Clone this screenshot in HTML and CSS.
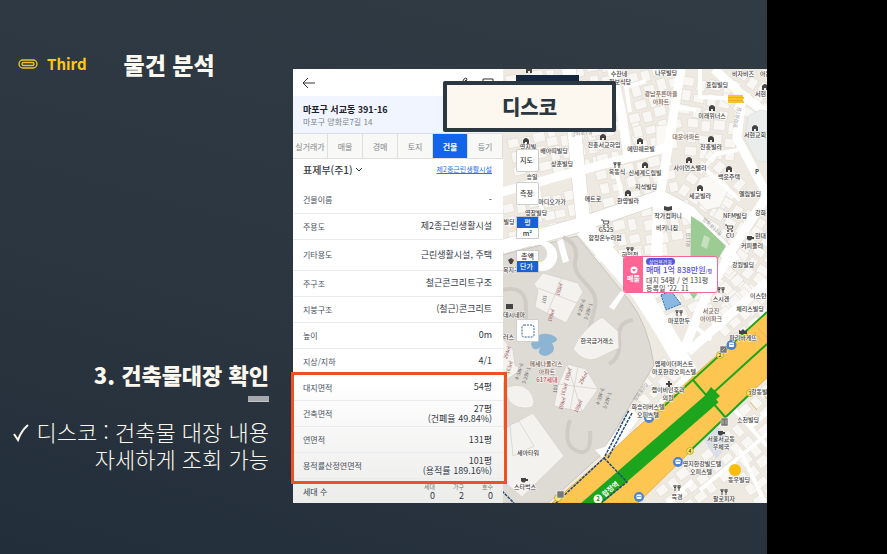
FILE: index.html
```html
<!DOCTYPE html>
<html lang="ko">
<head>
<meta charset="utf-8">
<title>물건 분석</title>
<link rel="stylesheet" href="styles.css">
</head>
<body>
<main class="slide">
  <section class="notes">
    <header class="chapter">
      <svg class="clip" viewBox="0 0 20 10" aria-hidden="true"><rect x="1" y="1" width="18" height="8" rx="4"/><rect x="4" y="3.500" width="12" height="3" rx="1.500"/></svg>
      <span class="chapter-name">Third</span>
      <h1>물건 분석</h1>
    </header>
    <div class="point">
      <h2>3. 건축물대장 확인</h2>
      <i class="bar"></i>
      <p><svg class="check" viewBox="0 0 18 20" aria-hidden="true"><path d="M2 11 L6 17 Q9 8 16 2"/></svg>디스코 : 건축물 대장 내용<br>자세하게 조회 가능</p>
    </div>
  </section>

  <section class="capture">
    <article class="panel">
      <div class="topbar">
        <button class="icon" aria-label="뒤로"><svg viewBox="0 0 14 12"><path d="M13 6H1M6 1L1 6l5 5"/></svg></button>
        <span class="tools">
          <button class="icon" aria-label="편집"><svg viewBox="0 0 14 12"><path d="M4 8l3-6q2-2 3 0l-2 5M6 6l3-3"/></svg></button>
          <button class="icon" aria-label="창"><svg viewBox="0 0 14 12"><path d="M3 10V2h10v8z"/></svg></button>
        </span>
      </div>
      <div class="address">
        <strong>마포구 서교동 391-16</strong>
        <span>마포구 양화로7길 14</span>
      </div>
      <nav class="tabs">
        <button>실거래가</button><button>매물</button><button>경매</button><button>토지</button><button class="on">건물</button><button>등기</button>
      </nav>
      <div class="ledger">
        <button class="pick">표제부(주1)<svg viewBox="0 0 8 8" aria-hidden="true"><path d="M1 3l3 3 3-3"/></svg></button>
        <a href="#use">제2종근린생활시설</a>
      </div>
      <table>
        <tbody>
          <tr><th>건물이름</th><td>-</td></tr>
          <tr><th>주용도</th><td>제2종근린생활시설</td></tr>
          <tr class="tall"><th>기타용도</th><td>근린생활시설, 주택</td></tr>
          <tr><th>주구조</th><td>철근콘크리트구조</td></tr>
          <tr><th>지붕구조</th><td>(철근)콘크리트</td></tr>
          <tr><th>높이</th><td>0m</td></tr>
          <tr><th>지상/지하</th><td>4/1</td></tr>
        </tbody>
      </table>
      <div class="marked">
        <table>
          <tbody>
            <tr><th>대지면적</th><td>54평</td></tr>
            <tr><th>건축면적</th><td>27평<br>(건폐율 49.84%)</td></tr>
            <tr><th>연면적</th><td>131평</td></tr>
            <tr><th>용적률산정연면적</th><td>101평<br>(용적률 189.16%)</td></tr>
          </tbody>
        </table>
      </div>
      <div class="units">
        <span class="label">세대 수</span>
        <span class="unit"><small>세대</small>0</span>
        <span class="unit"><small>가구</small>2</span>
        <span class="unit"><small>호수</small>0</span>
      </div>
    </article>

    <div class="map">
      <svg class="streets" viewBox="503 69 264 434" preserveAspectRatio="xMidYMid slice">
        <defs>
          <g id="lots">
            <path d="M0 0h11v9h-11zM14 1h9v11h-9zM26 -1h12v10h-12zM41 0h8v12h-8zM1 13h9v11h-9zM13 16h11v8h-11zM27 13h9v12h-9zM39 16h11v9h-11zM0 28h12v9h-12zM15 28h8v11h-8zM26 29h12v9h-12zM41 28h9v10h-9z"/>
          </g>
          <g id="home"><path d="M-3 3V-1Q0-5 3-1V3H1V1H-1V3z"/></g>
          <g id="fork"><path d="M-3-3v2q1 2 2 0v-2M-2-3v6M2-3v6M1-3v3h2v-3"/></g>
          <g id="cart"><path d="M-4-3h2l1 4h4l1-3h-5"/><circle cx="-1" cy="3" r=".6"/><circle cx="3" cy="3" r=".6"/></g>
          <g id="cup"><path d="M-3-2h5v3q-2.500 3-5 0zM2-1h2v2h-2"/></g>
          <g id="bus"><circle r="5"/><rect x="-2.500" y="-2.500" width="5" height="4.500" rx="1"/><path d="M-2-.5h4M-1.500 2v1M1.500 2v1"/></g>
        </defs>
        <rect class="ground" x="502" y="69" width="265" height="434"/>
        <g class="lots">
          <use href="#lots" transform="translate(505 76) rotate(-8)"/>
          <use href="#lots" transform="translate(560 68) rotate(-10)"/>
          <use href="#lots" transform="translate(507 140) rotate(-12)"/>
          <use href="#lots" transform="translate(546 138) rotate(-12)"/>
          <use href="#lots" transform="translate(590 128) rotate(-12)"/>
          <use href="#lots" transform="translate(595 172) rotate(-14)"/>
          <use href="#lots" transform="translate(626 75) rotate(-16)"/>
          <use href="#lots" transform="translate(628 115) rotate(-14)"/>
          <use href="#lots" transform="translate(622 165) rotate(-13)"/>
          <use href="#lots" transform="translate(538 198) rotate(-12)"/>
          <use href="#lots" transform="translate(502 205) rotate(-12)"/>
          <use href="#lots" transform="translate(587 228) rotate(-12)"/>
          <use href="#lots" transform="translate(640 208) rotate(-10)"/>
          <use href="#lots" transform="translate(618 250) rotate(-8)"/>
          <use href="#lots" transform="translate(684 76) rotate(10)"/>
          <use href="#lots" transform="translate(688 118) rotate(6)"/>
          <use href="#lots" transform="translate(710 150) rotate(42)"/>
          <use href="#lots" transform="translate(690 172) rotate(34)"/>
          <use href="#lots" transform="translate(725 196) rotate(32)"/>
          <use href="#lots" transform="translate(740 68) rotate(32)"/>
          <use href="#lots" transform="translate(755 225) rotate(34)"/>
          <use href="#lots" transform="translate(738 256) rotate(40)"/>
          <use href="#lots" transform="translate(690 295) rotate(-42)"/>
          <use href="#lots" transform="translate(708 320) rotate(-42)"/>
          <use href="#lots" transform="translate(650 292) rotate(-28)"/>
          <use href="#lots" transform="translate(628 390) rotate(-42)"/>
          <use href="#lots" transform="translate(655 490) rotate(-38)"/>
          <use href="#lots" transform="translate(700 455) rotate(-40)"/>
          <use href="#lots" transform="translate(738 410) rotate(-42)"/>
          <use href="#lots" transform="translate(735 478) rotate(-38)"/>
        </g>
        <path class="big" d="M656 126l19-2 3 24-22 4zM700 178l18-5 12 14-10 20-14 3-13-14z"/>
        <g class="casing">
          <path d="M569 69L577 160L584 228L640 292L664 330L690 375"/><path d="M502 247L582 224L660 197L690 213L735 262"/>
        </g>
        <g class="road wide"><path d="M569 69L577 160L584 228"/><path class="avenue" d="M584 228L640 292L664 330L690 375"/><path d="M502 247L582 224L660 197L690 213L735 262"/></g>
        <g class="road">
          <path d="M502 192L575 172L665 148"/><path d="M681 69L671 130L660 195L657 270"/>
          <path d="M612 69L622 115L628 155"/><path d="M714 69L742 95L767 114"/><path d="M742 98L737 138L767 195"/>
          <path d="M767 196L735 245L704 300L684 350"/><path d="M688 352L767 282"/><path d="M502 112L567 100"/>
          <path d="M640 430L690 375"/>
        </g>
        <g class="road thin"><path d="M676 107l20 3M738 150l-22 4-12 14 36 32M630 112l-4-25 20-6M700 69v28l42 2M535 178l9 40M605 222l12 50M655 205l-3 75M615 165l10 45M735 410l32 36M700 490l67-56M668 503l24-22M752 426l15-13M740 450l25 53M676 310l35 30"/></g>
        <path class="church" d="M748 116l12-6 7 1v51l-10-1-12-22z"/>
        <path class="park" d="M691 216l11 7 24 23-32 53-4-5z"/><path class="parklot" d="M704 235l6 3-3 11-6-3z"/>
        <path class="complex" d="M502 255L577 236 629 300Q648 324 654 365L600 456 548 503H502z"/>
        <g class="walk">
          <path d="M563 237q17 8 12 25c-3 18 25 24 20 45s-8 22-1 34"/><path d="M502 290q25-6 24 20t12 26M633 320q-16 2-14 20t-10 24M570 420q-8 25 7 31t13-20"/>
        </g>
        <path class="road-fill" d="M532 245a15 15 0 1 1 0 22v-7a9 9 0 1 0 0-13zM557 241l6-2 6 22-6 2zM621 291l4 2-11 17-5-3zM595 450l10-3 27-38 8 8-33 45z"/>
        <g class="tower">
          <path d="M543 273l35 10 5 9-17 31-31-16 3-17-4-6z"/><path d="M538 288l39 15M562 277l-15 37"/>
          <path d="M567 364l19 5 12 20-16 23-28-6 4-21z"/><path d="M558 384l40 5M578 366l-8 45M567 364l15 48"/>
          <path d="M502 338l11 12 2 15 7 4-20 14z"/>
          <path d="M502 430l31-17 31 43-42 41-20-17z"/><path d="M510 425l9-4 15 25-21 10z"/>
          <path d="M602 317l16 14 1 17-23 11q-12 4-23-10 8-19 29-32z"/>
          <path d="M507 387q18-6 25 8t-8 13-17-13z"/>
        </g>
        <path class="water" d="M531 344q6-14 21-9 10 5 0 8 6 10-7 13-10-2-4-9-8 6-10-3z"/>
        <path class="post" d="M702 436l16-9 14 14-16 18z"/>
        <path class="highway" d="M552 503L604 458 700 370 767 312V378L740 402 692 450 638 503z"/>
        <path class="hatch" d="M754 332l9 10M758 328l9 10M750 402l7 8M762 392l5 7"/>
        <g class="metro">
          <path class="track" d="M586 508L714 397"/><path d="M663 407L767 312M713 393L767 344M693 380L726 418M690 451L752 392"/>
        </g>
        <path class="platform" d="M705 395l6-8 9 9-9 8z"/>
        <path class="dots" d="M556 503L604 458L629 410M608 458L632 413M604 458L627 482L602 502M502 491L514 503"/>
        <path class="target" d="M661 295l10-4 10 13-15 6z"/>
        <g class="exits">
          <circle cx="661" cy="408" r="3.500"/><circle cx="720" cy="355" r="3.500"/><circle cx="750" cy="393" r="3.500"/><circle cx="690" cy="451" r="3.500"/><circle cx="558" cy="498" r="3.500"/>
        </g>
        <g class="digits"><text x="661" y="410">1</text><text x="720" y="357">2</text><text x="750" y="395">3</text><text x="690" y="453">4</text></g>
        <g class="lift"><rect x="720" y="346" width="7" height="7"/><rect x="721" y="418" width="7" height="8"/><rect x="557" y="491" width="7" height="7"/><path d="M722 351l3-3M723 420v4M726 420v4"/></g>
        <g class="bus"><use href="#bus" x="731.500" y="345"/><use href="#bus" x="649" y="418"/><use href="#bus" x="678" y="462"/><use href="#bus" x="639" y="497"/></g>
        <circle class="dot" cx="735" cy="470" r="6"/>
        <path class="memo" d="M728 95h15v2h1v2h-1v2h1v2h-16z"/><path class="memo-lines" d="M728 97.500h15M728 100.500h15"/>
        <g class="marks">
          <use href="#home" x="526" y="141"/><use href="#home" x="603" y="137"/><use href="#home" x="529" y="70"/><use href="#home" x="640" y="141"/><use href="#home" x="645" y="165"/><use href="#home" x="628" y="193"/><use href="#home" x="712" y="108"/><use href="#home" x="711" y="139"/><use href="#home" x="689" y="160"/><use href="#home" x="729" y="169"/><use href="#home" x="700" y="188"/><use href="#home" x="755" y="128"/><use href="#home" x="765" y="87"/>
        </g>
        <g class="lines"><use href="#fork" x="617" y="165"/><use href="#fork" x="630" y="250"/><use href="#fork" x="679" y="313"/><use href="#fork" x="721" y="290"/><use href="#fork" x="677" y="488"/><use href="#fork" x="724" y="492"/><use href="#cart" x="605" y="223"/><use href="#cart" x="729" y="228"/></g>
        <g class="marks"><use href="#cup" x="524" y="480"/><use href="#cup" x="750" y="238"/><use href="#cup" x="721" y="433"/><path d="M664 206l4 1 4-1v4l-4 1-4-1zM739 330l2 1 2-2 2 2 2-1v4h-8zM666 383h2v-2h2v2h2v2h-2v2h-2v-2h-2zM506 304h7v5h-7zM508 260l3-2 3 2-2 4h-2z"/></g>
        <g class="names">
          <text x="528" y="149">영지빌</text><text x="554" y="153">배아띠빌딩</text><text x="562" y="166">상훈빌딩</text><text x="532" y="179">승일</text><text x="604" y="147">진흥서교하임</text><text x="617" y="174">옥동식</text>
          <text x="619" y="76">수잔네</text><text x="620" y="84">한보식당</text><text x="666" y="75">나무빌딩</text><text x="743" y="76">비자비즈</text><text class="edge" x="760" y="76">아몬</text><text x="717" y="87">효림빌딩</text><text class="edge" x="755" y="96">서현</text>
          <text class="brown" x="661" y="96">광남푸른마을</text><text class="brown" x="661" y="104">아파트</text><text x="712" y="118">미래위너스</text><text class="brown" x="686" y="139">대운아파트</text><text x="711" y="149">진흥빌라</text><text x="755" y="137">서현교회</text>
          <text x="641" y="151">에띤쉐르빌</text><text x="645" y="175">신세계드림빌</text><text x="646" y="189">지석빌딩</text><text x="628" y="203">한영빌라</text><text x="690" y="170">사이언스밸리</text><text x="729" y="179">백운주택</text><text x="700" y="198">세교빌라</text><text x="750" y="196">엘림빌딩</text>
          <text class="bold" x="757" y="174">P</text><text x="668" y="218">작가컴퍼니</text><text x="667" y="230">비키니짐</text><text x="735" y="218">NFM빌딩</text><text class="edge" x="755" y="215">강화</text><text x="730" y="238">CU</text><text class="edge" x="755" y="238">현대</text><text x="752" y="248">커피폴리</text>
          <text x="552" y="204">마디오가가</text><text x="593" y="201">메트로</text><text x="536" y="215">영창빌딩</text><text x="509" y="224">빌딩</text><text x="606" y="232">GS25</text><text x="605" y="240">합정온누리점</text><text x="630" y="257">하임점</text><text class="edge" x="503" y="272">복지구</text>
          <text x="743" y="267">강원빌딩</text><text x="721" y="301">스시겐</text><text class="edge" x="750" y="298">이스턴</text><text x="750" y="311">체리스빌딩</text><text class="brown" x="711" y="313">서교진</text><text class="brown" x="711" y="321">아이파크</text><text x="679" y="323">마포만두</text><text x="743" y="340">파리바게뜨</text>
          <text class="edge" x="503" y="317">데시네마</text><text class="edge" x="503" y="339">러스</text><text x="597" y="343">한국금거래소</text><text class="brown" x="546" y="366">메세나폴리스</text><text class="brown" x="547" y="374">아파트</text><text class="red" x="547" y="382">617세대</text>
          <text x="674" y="366">엠제이더퍼스트</text><text x="674" y="374">마포한강오피스텔</text><text x="668" y="392">랩이비인후과</text><text x="668" y="400">의원</text><text x="648" y="409">화승리버스텔</text><text x="648" y="417">오피스텔</text><text class="edge" x="751" y="394">강동빌</text><text x="748" y="422">소천빌딩</text>
          <text x="721" y="441">서울서교동</text><text x="721" y="449">우체국</text><text x="702" y="466">명지한강빌드텔</text><text x="701" y="474">오피스텔</text><text x="739" y="482">동우빌딩</text><text x="677" y="499">북경</text><text x="724" y="501">팔로피자</text><text x="528" y="455">세아타워</text><text x="525" y="489">스타벅스</text>
        </g>
        <g class="roadnames"><text transform="translate(711 228) rotate(42)">양화로11길</text><text transform="translate(739 118) rotate(-78)">양화로7길</text><text transform="translate(642 393) rotate(-52)">양화로7길</text><text transform="translate(690 240) rotate(-88)">로11길</text><text transform="translate(582 135) rotate(-8)">양화로7길</text></g>
        <g class="plots"><text transform="translate(546 300) rotate(-75)">103</text><text transform="translate(561 290) rotate(-72)" class="red">190㎡</text><text transform="translate(553 316) rotate(-72)" class="red">198㎡</text><text transform="translate(583 308) rotate(-72)">4-29F-6</text><text transform="translate(590 312) rotate(-72)">3-29F-1</text><text transform="translate(570 375) rotate(-72)" class="red">190㎡</text><text transform="translate(566 390) rotate(-72)" class="red">163㎡</text><text transform="translate(585 379) rotate(-60)" class="red">294㎡</text><text transform="translate(564 404) rotate(-72)" class="red">198㎡</text><text transform="translate(580 407) rotate(-65)" class="red">198㎡</text><text transform="translate(557 389) rotate(-85)">101</text><text transform="translate(602 397) rotate(-72)">4-39F-6</text><text transform="translate(609 401) rotate(-72)">3-29F-1</text><text transform="translate(521 372) rotate(-72)">4-38F-6</text><text transform="translate(528 376) rotate(-72)">3-29F-1</text><text transform="translate(509 353) rotate(-72)" class="red">294㎡</text><text transform="translate(511 368) rotate(-72)" class="red">163㎡</text></g>
        <g class="station"><circle cx="598" cy="499" r="4.500"/><text class="line-no" x="598" y="501">2</text><text class="station-name" transform="translate(612 491) rotate(-41)">합정역</text></g>
      </svg>
      <div class="controls">
        <button class="tile">지도<i>⁝</i></button>
        <button class="tile">측정<i>⁝</i></button>
        <div class="switch"><button class="on">평</button><button>m²</button></div>
        <div class="switch"><button>총액</button><button class="on">단가<i>⁝</i></button></div>
        <button class="tile area" aria-label="영역"><svg viewBox="0 0 16 16"><rect x="2" y="2" width="12" height="12" rx="2"/></svg></button>
      </div>
      <div class="listing">
        <div class="kind"><svg viewBox="0 0 8 8" aria-hidden="true"><circle cx="4" cy="4" r="3.500"/><path d="M2 3l2 3 2-3z"/></svg>매물</div>
        <div class="facts"><em>상업용건물</em><b>매매 1억 838만원<small>/평</small></b><span>대지 54평 / 연 131평</span><span>등록일 '22. 11</span></div>
      </div>
    </div>
    <div class="shade"></div>
    <div class="brand">디스코</div>
  </section>
</main>
</body>
</html>
```
FILE: styles.css
```css
* { box-sizing: border-box; }
body {
  margin: 0;
  min-height: 100vh;
  padding-right: 120px;
  background: #000;
  font-family: "Noto Sans CJK KR", sans-serif;
}
button { border: 0; padding: 0; margin: 0; background: none; font: inherit; color: inherit; }
svg { display: block; }
i { font-style: normal; }
.slide {
  display: grid;
  grid-template-columns: 293px 1fr;
  min-height: 100vh;
  background: linear-gradient(15deg, #222e3a, #2c3640 45%, #303b44);
}

.notes {
  display: flex;
  flex-direction: column;
  justify-content: space-between;
  padding: 44px 24px 82px 12px;
  color: #fbf8f0;
}
.chapter { display: flex; align-items: center; height: 40px; padding-left: 6px; }
.clip { width: 20px; height: 10px; fill: none; stroke: #e9c02c; stroke-width: 1.4; }
.chapter-name { margin: 0 37px 0 9px; color: #fcc81c; font-size: 15px; font-weight: 700; line-height: 24px; }
h1, h2, p { margin: 0; }
h1 { font-size: 23px; font-weight: 900; line-height: 40px; }
.point { display: flex; flex-direction: column; align-items: flex-end; white-space: nowrap; }
h2 { font-size: 22px; font-weight: 900; line-height: 36px; }
.bar { width: 21px; height: 6px; margin: 4px 0 16px; background: #a5a8ad; border-bottom: 1px solid #c4c6c9; }
.point p { font-size: 22px; font-weight: 300; line-height: 27px; text-align: right; }
.check { display: inline-block; width: 18px; height: 20px; margin-right: 6px; vertical-align: -2px; fill: none; stroke: #fbf8f0; stroke-width: 2; }

.capture { position: relative; display: flex; align-items: stretch; margin: 69px 0 51px; }
.panel {
  display: flex;
  flex-direction: column;
  width: 210px;
  flex: none;
  background: linear-gradient(#fff 72%, #ececeb);
  color: #333a45;
  font-size: 8px;
  line-height: 11px;
}
.topbar { display: flex; justify-content: space-between; align-items: center; height: 27px; padding: 0 9px; }
.tools { display: flex; gap: 9px; }
.icon svg { width: 14px; height: 12px; fill: none; stroke: #333; stroke-width: 1; }
.address { display: flex; flex-direction: column; justify-content: center; height: 37px; padding: 0 10px; background: #f1f5ff; color: #80858c; }
.address strong { color: #1c2028; font-size: 9px; line-height: 13px; }
.tabs { display: grid; grid-template-columns: repeat(6, 1fr); height: 26px; border: solid #dedede; border-width: 1px 0; background: #f8f8f7; color: #85878b; }
.tabs button { border-right: 1px solid #dedede; white-space: nowrap; }
.tabs .on { background: #1264e8; color: #fff; font-weight: 700; }
.ledger { display: flex; justify-content: space-between; align-items: center; height: 28px; padding: 0 11px 8px 10px; }
.pick { display: flex; align-items: center; gap: 2px; font-size: 10px; font-weight: 500; }
.pick svg { width: 8px; height: 8px; fill: none; stroke: #333a45; }
.ledger a { color: #2a74e4; font-size: 7px; }
table { width: 100%; border-collapse: collapse; }
tr { height: 26px; border-bottom: 1px solid #e9ebee; }
.tall { height: 31px; }
th, td { padding: 0; }
th { padding-left: 10px; text-align: left; font-weight: 400; color: #4a515e; white-space: nowrap; }
td { padding-right: 11px; text-align: right; font-size: 9px; line-height: 10px; }
.marked { position: relative; }
.marked::after { content: ""; position: absolute; inset: -3px -4px -5px -2px; border: 3px solid #ee5127; z-index: 2; }
.units { display: flex; align-items: center; flex: 1; padding: 0 10px; }
.label { flex: 1; }
.unit { width: 29px; text-align: right; font-size: 9px; line-height: 10px; }
.unit small { display: block; font-size: 6px; line-height: 9px; color: #777; }

.map { position: relative; flex: 1; min-width: 0; overflow: hidden; }
.streets { position: absolute; inset: 0; width: 100%; height: 100%; }
.ground { fill: #eeeae2; }
.lots { fill: #f8f7f3; stroke: #dedad1; stroke-width: .6; }
.big, .church { fill: #faf9f6; stroke: #dedad1; stroke-width: .6; }
.church { fill: #e9eeed; }
.casing { fill: none; stroke: #d5d2cb; stroke-width: 15; }
.road { fill: none; stroke: #fff; stroke-width: 9; stroke-linejoin: round; }
.wide { stroke-width: 14; }
.avenue { stroke-width: 18; }
.thin { stroke-width: 4; }
.park { fill: #9ccb94; }
.parklot { fill: #c5dfbf; }
.complex { fill: #dedad4; stroke: #c9c5bd; }
.walk { fill: none; stroke: #d0ccc4; stroke-width: 4; }
.road-fill { fill: #fff; }
.tower { fill: #f4f2ef; stroke: #d3cec8; stroke-width: .7; }
.water { fill: #8cb5d4; }
.post { fill: #d8dfe9; }
.highway { fill: #fdc650; stroke: #dba53c; stroke-width: .7; }
.hatch { stroke: #e5b557; stroke-width: 1; }
.metro { fill: none; stroke: #1da61d; stroke-width: 2; }
.metro .track { stroke-width: 14; }
.platform { fill: #1da61d; }
.dots { fill: none; stroke: #204a7c; stroke-width: 1.5; stroke-dasharray: 3 1; }
.target { fill: #8bb8e2; stroke: #2c6cb5; stroke-dasharray: 2 1; }
.exits { fill: #fae566; stroke: #a49018; stroke-width: .6; }
.digits, .names, .plots, .roadnames, .station { text-anchor: middle; }
.digits { font-size: 5px; }
.lift { fill: #777; stroke: #fff; stroke-width: .5; }
.bus { fill: #4d82cd; }
#bus rect { fill: #fff; }
#bus path { stroke: #4d82cd; stroke-width: .7; }
.dot { fill: #f8bd08; }
.memo { fill: #fac426; }
.memo-lines { stroke: #dfa51b; stroke-width: .6; }
.marks { fill: #444; }
.lines { fill: none; stroke: #444; stroke-width: .9; }
.names { font-size: 6px; font-weight: 500; fill: #3e3c3a; paint-order: stroke; stroke: #fff; stroke-width: 1; }
.names .edge { text-anchor: start; }
.names .brown { fill: #75584a; }
.names .red { fill: #c13d48; }
.names .bold { font-weight: 700; }
.roadnames { font-size: 5px; fill: #999; }
.plots { font-size: 5px; fill: #666; }
.plots .red { fill: #9a5054; }
.station { fill: #fff; font-weight: 700; }
.line-no { fill: #1b8c1b; font-size: 6px; }
.station-name { font-size: 7px; }

.controls { position: absolute; left: 13px; top: 80px; display: flex; flex-direction: column; gap: 10px; width: 23px; font-size: 7px; line-height: 10px; font-weight: 500; color: #333; }
.tile { height: 23px; background: #fff; border: 1px solid #cfcfcf; border-radius: 2px; }
.tile i, .switch i { color: #8b9097; font-size: 6px; }
.switch { display: grid; height: 23px; margin-top: 1px; background: #fff; border: 1px solid #ccc; }
.switch .on { background: #1961d2; color: #fff; }
.area { margin-top: 36px; }
.area svg { width: 16px; height: 16px; margin: auto; fill: none; stroke: #355f86; stroke-dasharray: 2 1; }
.listing { position: absolute; left: 120px; top: 187px; display: flex; width: 95px; height: 37px; overflow: hidden; background: #fff; border: 1px solid #f0699a; border-radius: 3px; white-space: nowrap; }
.kind { display: flex; flex-direction: column; align-items: center; justify-content: center; width: 19px; background: #fc6596; color: #fff; font-size: 7px; line-height: 9px; font-weight: 700; }
.kind svg { width: 8px; height: 8px; fill: #fff; }
.kind path { fill: #fc6596; }
.facts { display: flex; flex-direction: column; align-items: flex-start; padding: 1px 3px; font-size: 7px; line-height: 8px; color: #444; }
.facts em { padding: 0 3px; border-radius: 4px; background: #5a55e0; color: #fff; font-size: 5px; line-height: 7px; font-style: normal; }
.facts b { color: #5650dc; font-size: 8px; line-height: 10px; font-weight: 500; }
.facts small { font-size: 5px; }

.shade { position: absolute; left: 223px; top: 6px; width: 63px; height: 8px; background: #14273f; }
.brand { position: absolute; left: 150px; top: 12px; display: grid; place-items: center; width: 173px; height: 51px; border: 4px solid #2c3841; border-radius: 2px; background: #fcf8f0; color: #2c3841; font-size: 20px; line-height: 36px; font-weight: 900; z-index: 3; }
```
